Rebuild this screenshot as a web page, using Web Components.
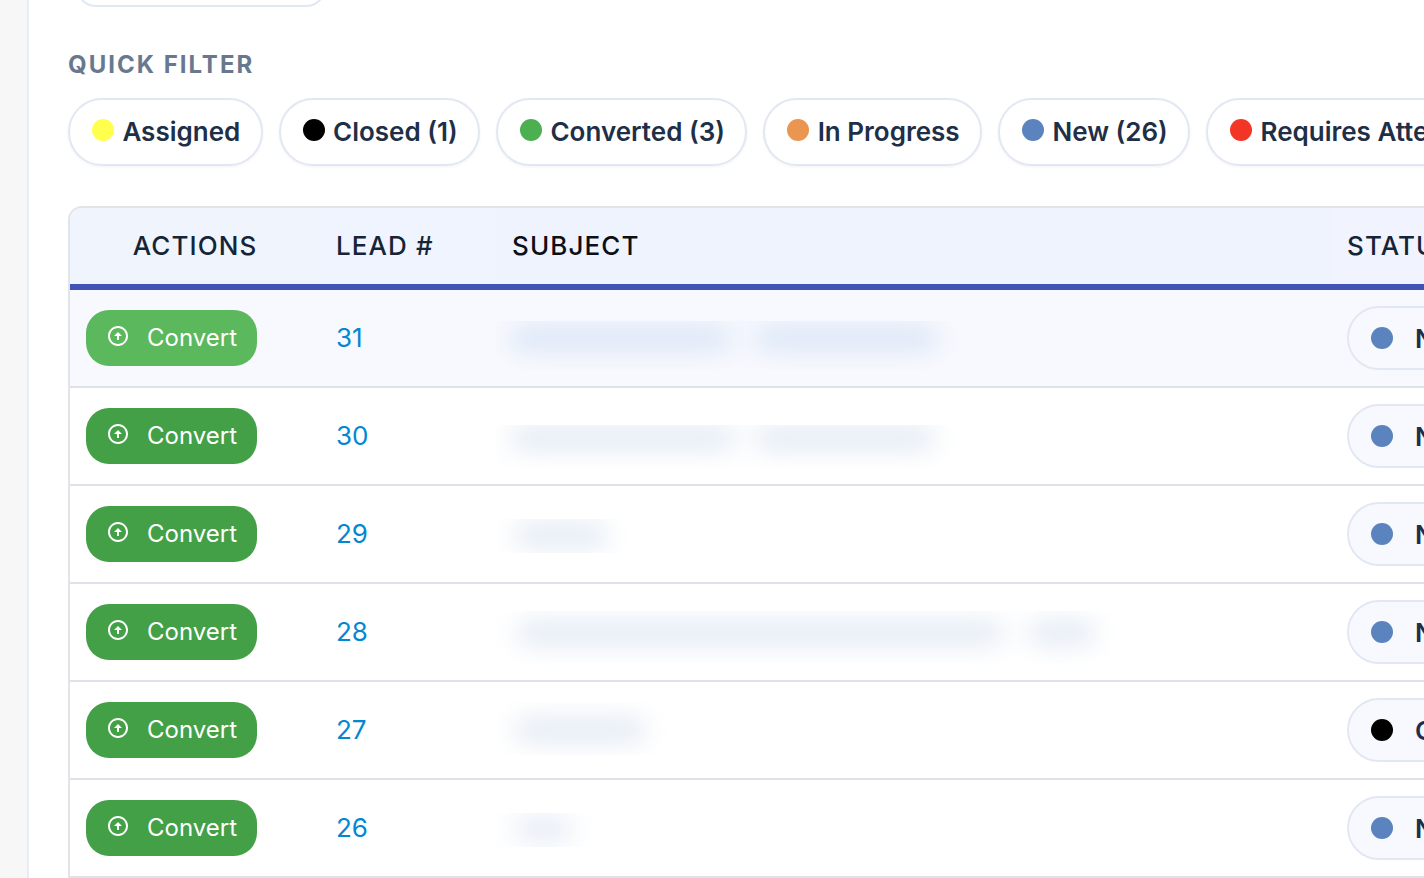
<!DOCTYPE html>
<html lang="en">
<head>
<meta charset="utf-8">
<title>Leads</title>
<style>
  html, body { margin: 0; height: 878px; overflow: hidden; }
  body {
    font-family: Inter, "Liberation Sans", sans-serif;
    color: #1e2f47;
    background: linear-gradient(90deg, #f7f7f8 27px, #fff 27px);
  }
</style>
</head>
<body>
<lead-page></lead-page>
<script>
const STATUS_COLORS = {
  Assigned: '#ffff4d',
  Closed: '#000000',
  Converted: '#4caf50',
  'In Progress': '#ea9650',
  New: '#5b83bd',
  'Requires Attention': '#f33526'
};

const FILTERS = [
  ['Assigned', 'Assigned'],
  ['Closed', 'Closed (1)'],
  ['Converted', 'Converted (3)'],
  ['In Progress', 'In Progress'],
  ['New', 'New (26)'],
  ['Requires Attention', 'Requires Attention (2)']
];

// subject column is blurred in the reference: blobs are [left, width], the rest is the clip box
const LEADS = [
  { id: 31, status: 'New', blobs: [[14, 222], [258, 184]], top: 31, height: 49, center: 17, clip: 470, tone: '#d9e5f6', hover: true },
  { id: 30, status: 'New', blobs: [[14, 226], [258, 182]], top: 37, height: 43, center: 13, clip: 465, tone: '#e2eaf4' },
  { id: 29, status: 'New', blobs: [[18, 94]], top: 33, height: 34, center: 16, clip: 140, tone: '#e2eaf4' },
  { id: 28, status: 'New', blobs: [[20, 488], [532, 68]], top: 27, height: 52, center: 22, clip: 630, tone: '#e2eaf4' },
  { id: 27, status: 'Closed', blobs: [[18, 132]], top: 20, height: 53, center: 28, clip: 172, tone: '#e2eaf4' },
  { id: 26, status: 'New', blobs: [[18, 58]], top: 33, height: 34, center: 16, clip: 108, tone: '#e4ebf5' }
];

class ConvertButton extends HTMLElement {
  constructor() {
    super();
    this.attachShadow({ mode: 'open' }).innerHTML = `
      <style>
        :host {
          display: inline-flex;
          align-items: center;
          box-sizing: border-box;
          width: 171px;
          height: 56px;
          padding-left: 20px;
          gap: 17px;
          border-radius: 23px;
          background: #43a047;
          color: #fff;
          font-size: 24px;
          line-height: 56px;
        }
        :host([hover]) { background: #5cb85c; }
        svg { width: 24px; height: 24px; margin-bottom: 4px; fill: currentColor; flex: none; }
      </style>
      <svg viewBox="0 0 24 24"><path d="M12 20c-4.41 0-8-3.59-8-8s3.59-8 8-8 8 3.59 8 8-3.59 8-8 8m0 2c5.52 0 10-4.48 10-10S17.52 2 12 2 2 6.48 2 12s4.48 10 10 10zm-1-10v4h2v-4h3l-4-4-4 4h3z"/></svg>
      <span><slot></slot></span>
    `;
  }
}

class StatusChip extends HTMLElement {
  static get observedAttributes() { return ['color']; }

  constructor() {
    super();
    this.attachShadow({ mode: 'open' }).innerHTML = `
      <style>
        :host {
          display: inline-flex;
          flex: none;
          align-items: center;
          box-sizing: border-box;
          height: 68px;
          padding: 0 20.4px 0 22px;
          gap: 8.4px;
          border: 2px solid #e2e8f3;
          border-radius: 34px;
          background: #fff;
          box-shadow: 0 1px 3px rgba(30, 47, 71, .06);
          color: #1e2f47;
          font-size: 26px;
          font-weight: 600;
          white-space: nowrap;
        }
        :host([compact]) {
          height: 64px;
          padding: 0 22px;
          gap: 22px;
          background: #f8f9fe;
          box-shadow: none;
        }
        .dot { width: 22px; height: 22px; border-radius: 50%; margin-bottom: 4px; flex: none; }
        .label { margin-bottom: 2px; }
        :host([compact]) .dot, :host([compact]) .label { margin-bottom: 0; }
      </style>
      <span class="dot"></span>
      <span class="label"><slot></slot></span>
    `;
  }

  attributeChangedCallback(name, oldValue, value) {
    this.shadowRoot.querySelector('.dot').style.background = value;
  }
}

class BlurredText extends HTMLElement {
  _lead = null;

  constructor() {
    super();
    this.shadow = this.attachShadow({ mode: 'open' });
  }

  set lead(value) { this._lead = value; this.render(); }

  render() {
    const { blobs, top, height, center, clip, tone } = this._lead;
    this.shadow.innerHTML = `
      <style>
        :host {
          display: block;
          position: relative;
          overflow: hidden;
          width: ${clip}px;
          height: ${height}px;
          margin-top: ${top}px;
        }
        i {
          position: absolute;
          top: ${center - 12}px;
          height: 24px;
          border-radius: 12px;
          background: ${tone};
          filter: blur(13px);
        }
      </style>
      ${blobs.map(([left, width]) => `<i style="left:${left}px;width:${width}px"></i>`).join('')}
    `;
  }
}

class LeadRow extends HTMLElement {
  _lead = null;

  constructor() {
    super();
    this.shadow = this.attachShadow({ mode: 'open' });
  }

  set lead(value) { this._lead = value; this.render(); }

  render() {
    const lead = this._lead;
    this.shadow.innerHTML = `
      <style>
        :host {
          display: grid;
          grid-template-columns: 250px 176px 834px 400px;
          height: 98px;
          box-sizing: border-box;
          border-bottom: 2px solid #dfe3e9;
          background: #fff;
        }
        :host([hover]) { background: #f8f9fe; }
        .actions { padding: 20px 0 0 16px; }
        .lead {
          padding-left: 16px;
          line-height: 96px;
          font-size: 26px;
          color: #0288d1;
        }
        .status { padding: 16px 0 0 17px; }
      </style>
      <div class="actions"><convert-button ${lead.hover ? 'hover' : ''}>Convert</convert-button></div>
      <div class="lead">${lead.id}</div>
      <div class="subject"><blurred-text></blurred-text></div>
      <div class="status">
        <status-chip compact color="${STATUS_COLORS[lead.status]}">${lead.status}</status-chip>
      </div>
    `;
    this.shadow.querySelector('blurred-text').lead = lead;
  }
}

class LeadsTable extends HTMLElement {
  _leads = [];

  constructor() {
    super();
    this.shadow = this.attachShadow({ mode: 'open' });
  }

  set leads(value) { this._leads = value; this.render(); }

  render() {
    this.shadow.innerHTML = `
      <style>
        :host {
          display: block;
          width: 1400px;
          border: 2px solid #e2e4e8;
          border-radius: 14px 0 0 0;
          overflow: hidden;
          background: #fff;
        }
        .head {
          display: grid;
          grid-template-columns: 250px 176px 834px 400px;
          height: 82px;
          box-sizing: border-box;
          border-bottom: 6px solid #4153b5;
          background: #eff3fd;
          color: #152536;
          font-size: 26px;
          font-weight: 500;
          letter-spacing: 1.1px;
          line-height: 76px;
        }
        .head div { padding-left: 16px; }
        .head .actions { padding-left: 0; text-align: center; background: #f0f4fd; }
        .head .lead { background: #f0f4fe; }
        .head .subject { color: #0c0f14; background: #eff3fd; }
        .head .status { padding-left: 17px; background: #f1f4fe; }
      </style>
      <div class="head">
        <div class="actions">ACTIONS</div>
        <div class="lead">LEAD #</div>
        <div class="subject">SUBJECT</div>
        <div class="status">STATUS</div>
      </div>
      ${this._leads.map(lead => `<lead-row ${lead.hover ? 'hover' : ''} data-id="${lead.id}"></lead-row>`).join('')}
    `;
    this._leads.forEach(lead => {
      this.shadow.querySelector(`lead-row[data-id="${lead.id}"]`).lead = lead;
    });
  }
}

class LeadPage extends HTMLElement {
  constructor() {
    super();
    this.shadow = this.attachShadow({ mode: 'open' });
  }

  connectedCallback() {
    this.shadow.innerHTML = `
      <style>
        :host {
          display: block;
          box-sizing: border-box;
          height: 878px;
          margin-left: 27px;
          padding: 0 0 0 39px;
          border-left: 2px solid #e8edf5;
          background: #fff;
          overflow: hidden;
        }
        .search {
          width: 250px;
          height: 40px;
          box-sizing: border-box;
          margin: -33px 0 0 8px;
          border: 2px solid #e2e8f3;
          border-radius: 20px;
        }
        h2 {
          margin: 42px 0 17px;
          height: 32px;
          color: #68798f;
          font-size: 24px;
          font-weight: 700;
          letter-spacing: 2px;
          line-height: 32px;
        }
        .filters { display: flex; gap: 16px; margin-bottom: 40px; width: 1500px; }
      </style>
      <div class="search"></div>
      <h2>QUICK FILTER</h2>
      <div class="filters">
        ${FILTERS.map(([status, label]) => `<status-chip color="${STATUS_COLORS[status]}">${label}</status-chip>`).join('')}
      </div>
      <leads-table></leads-table>
    `;
    this.shadow.querySelector('leads-table').leads = LEADS;
  }
}

customElements.define('convert-button', ConvertButton);
customElements.define('status-chip', StatusChip);
customElements.define('blurred-text', BlurredText);
customElements.define('lead-row', LeadRow);
customElements.define('leads-table', LeadsTable);
customElements.define('lead-page', LeadPage);
</script>
</body>
</html>
